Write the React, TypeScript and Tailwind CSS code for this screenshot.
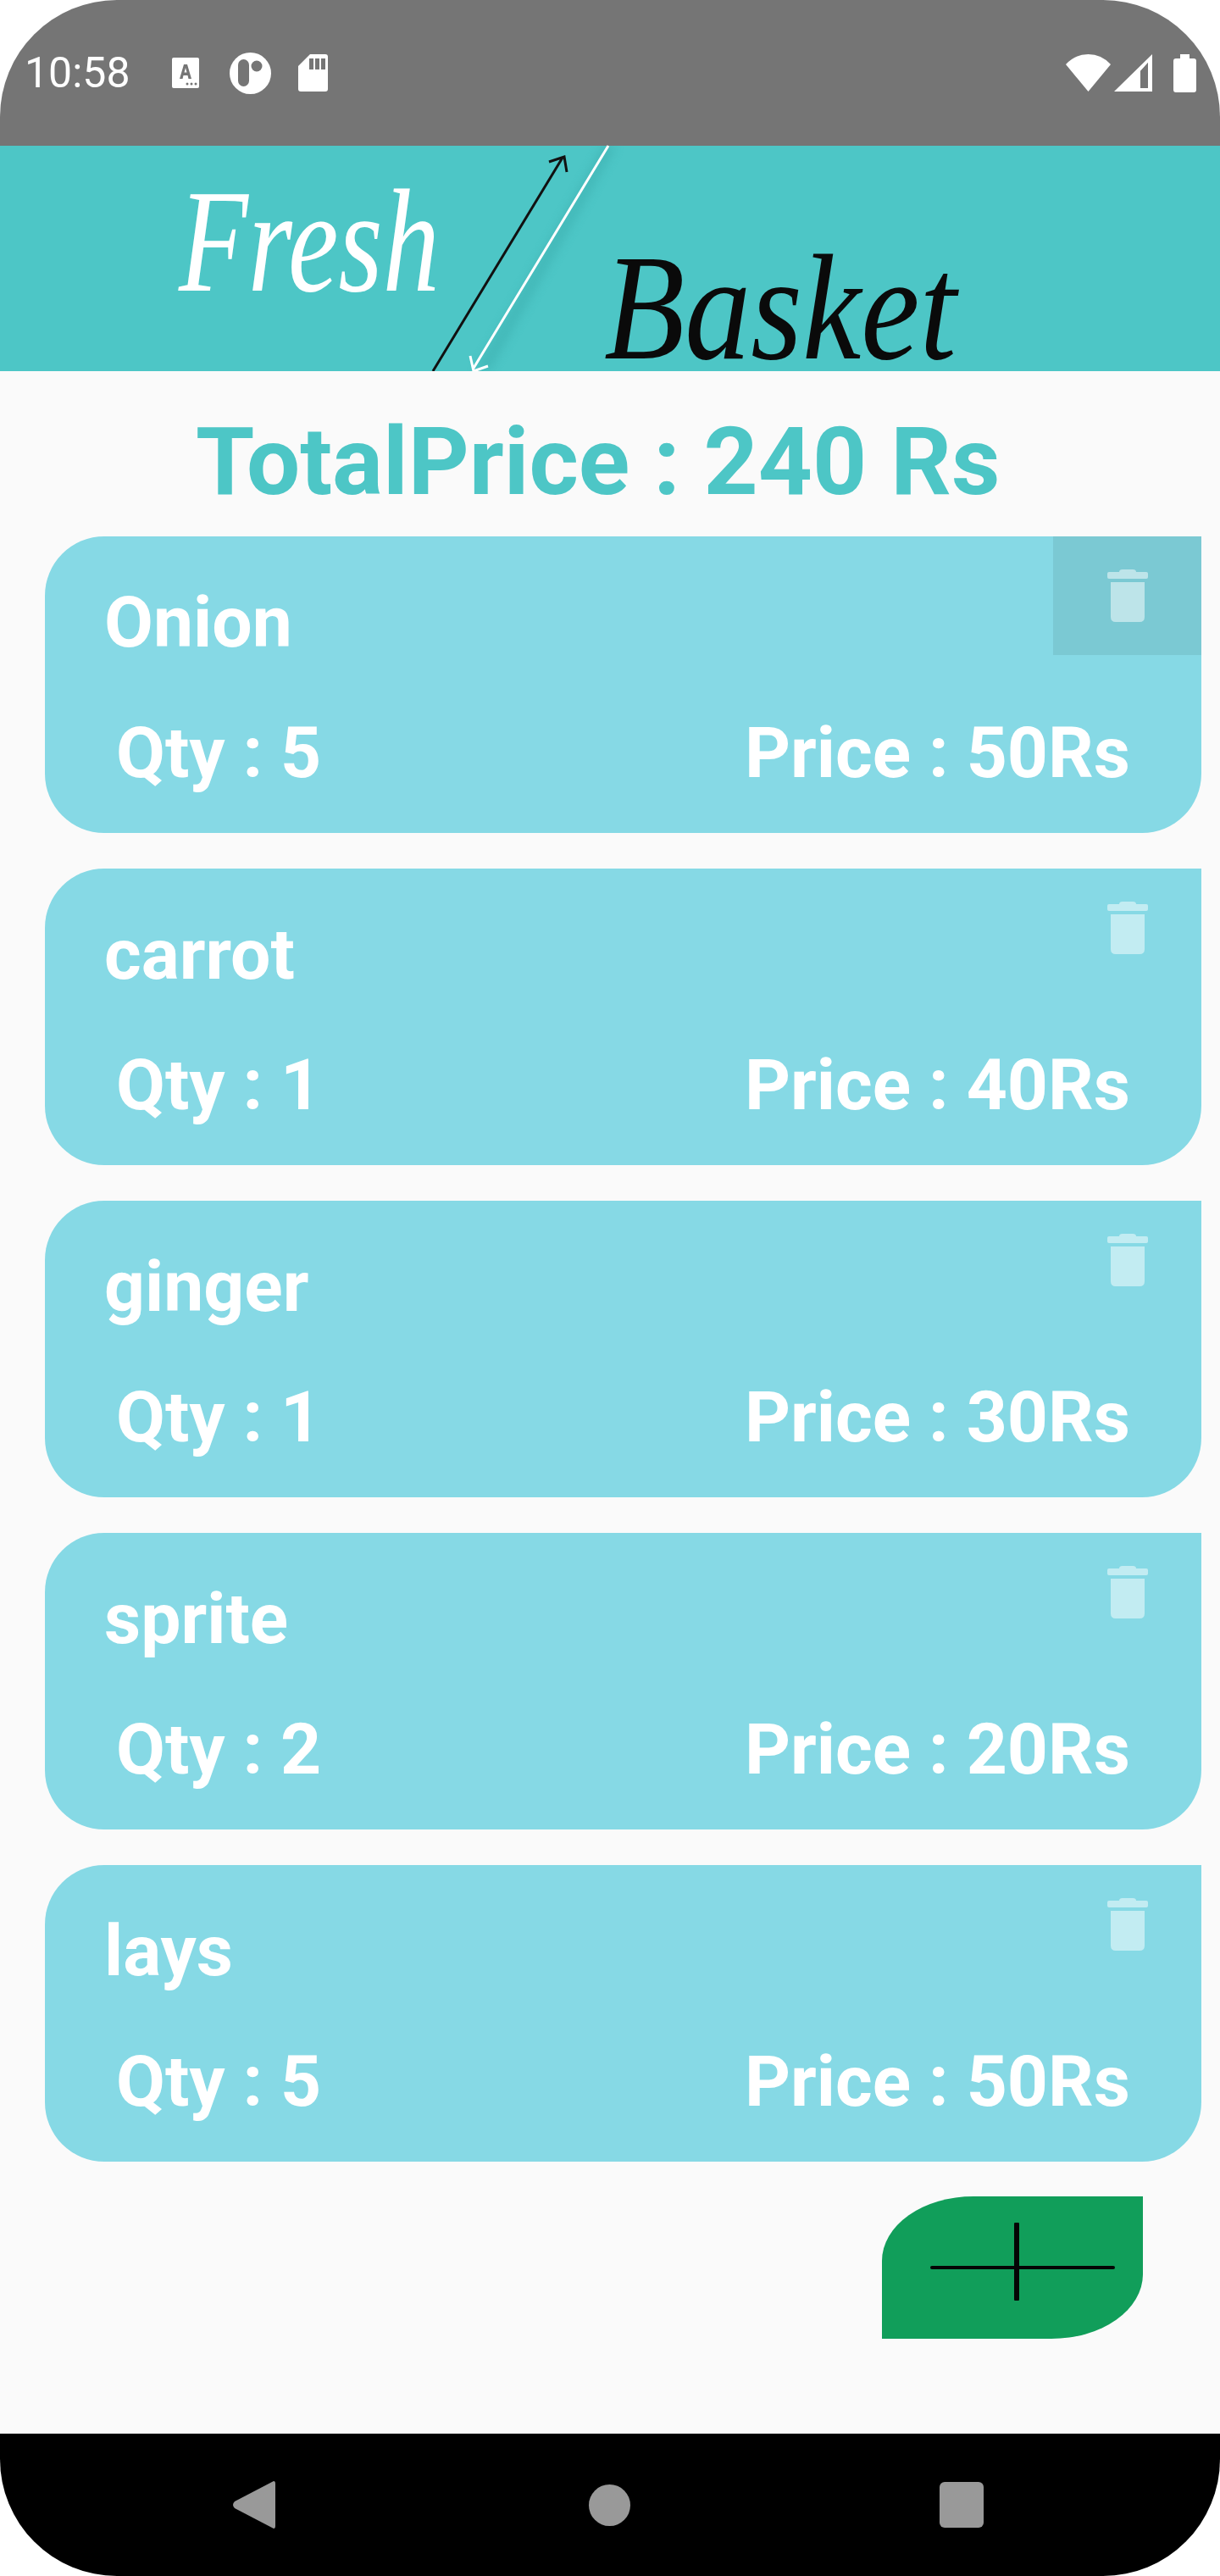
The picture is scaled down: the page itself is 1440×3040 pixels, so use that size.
const items = [
  { name: "Onion", qty: 5, price: 50, pressed: true },
  { name: "carrot", qty: 1, price: 40 },
  { name: "ginger", qty: 1, price: 30 },
  { name: "sprite", qty: 2, price: 20 },
  { name: "lays", qty: 5, price: 50 },
];

function StatusIcons() {
  return (
    <>
      <svg width="32" height="36" viewBox="0 0 32 36" className="ml-[49px]">
        <rect width="32" height="36" rx="2" fill="#fff" />
        <path d="M9 25 L14 8 H18 L23 25 H19.5 L18.5 21 H13.5 L12.5 25 Z M14.5 17.5 H17.5 L16 12 Z" fill="#757575" />
        <circle cx="18" cy="31" r="1.5" fill="#757575" />
        <circle cx="23" cy="31" r="1.5" fill="#757575" />
        <circle cx="28" cy="31" r="1.5" fill="#757575" />
      </svg>
      <svg width="49" height="49" viewBox="0 0 49 49" className="ml-[36px]">
        <circle cx="24.5" cy="24.5" r="24.5" fill="#fff" />
        <rect x="10" y="8" width="13" height="32" rx="6.5" fill="#757575" />
        <circle cx="32" cy="16" r="6.5" fill="#757575" />
      </svg>
      <svg width="35" height="44" viewBox="0 0 35 44" className="ml-[32px]">
        <path d="M14 0 H32 Q35 0 35 3 V41 Q35 44 32 44 H3 Q0 44 0 41 V14 Z" fill="#fff" />
        <rect x="13" y="5" width="5" height="13" fill="#757575" />
        <rect x="20" y="5" width="5" height="13" fill="#757575" />
        <rect x="27" y="5" width="5" height="13" fill="#757575" />
      </svg>
    </>
  );
}

function RightIcons() {
  return (
    <div className="flex items-center">
      <svg width="53" height="44" viewBox="0 0 53 44">
        <path d="M26.5 44 L0 12 Q11 0 26.5 0 Q42 0 53 12 Z" fill="#fff" />
      </svg>
      <svg width="45" height="44" viewBox="0 0 45 44" className="ml-[4px]">
        <path fill="#fff" fillRule="evenodd" d="M45 0 V44 H0 Z M40 10 L31 20 V40 H40 Z" />
        <path d="M31 20 L40 10 V39 H31 Z" fill="#757575" />
        <path d="M31 40 H41 V44 H31 Z" fill="#fff" />
      </svg>
      <svg width="27" height="45" viewBox="0 0 27 45" className="ml-[25px]">
        <path d="M8 0 H19 V5 H24 Q27 5 27 8 V42 Q27 45 24 45 H3 Q0 45 0 42 V8 Q0 5 3 5 H8 Z" fill="#fff" />
      </svg>
    </div>
  );
}

function Logo() {
  const serif = "'Liberation Serif', serif";
  return (
    <svg width="1440" height="266" viewBox="0 172 1440 266" className="block overflow-visible">
      <defs>
        <filter id="soft">
          <feGaussianBlur stdDeviation="6" />
        </filter>
        <clipPath id="band">
          <rect x="0" y="172" width="1440" height="266" />
        </clipPath>
      </defs>
      <g clipPath="url(#band)">
        <polygon points="712,172 728,172 578,438 560,438" fill="#2d9c9c" opacity="0.3" filter="url(#soft)" />
      </g>
      <text transform="translate(211 343) scale(1 1.3)" fontFamily={serif} fontStyle="italic" fontSize="134" fill="#fff">
        Fresh
      </text>
      <text transform="translate(713 423) scale(1 1.14)" fontFamily={serif} fontStyle="italic" fontSize="156" fill="#0a0a0a">
        Basket
      </text>
      <g fill="none" strokeWidth="3">
        <path d="M511 438 L664 186 M648 191 L666 185 L669 203" stroke="#111" />
        <path d="M718 172 L558 436 M555 420 L559 438 L576 432" stroke="#fff" />
      </g>
    </svg>
  );
}

function Trash() {
  return (
    <svg width="48" height="62" viewBox="0 0 48 62" className="opacity-50">
      <path d="M14 3 Q14 0 18 0 H30 Q34 0 34 3 H46 Q48 3 48 5 V9 Q48 11 46 11 H2 Q0 11 0 9 V5 Q0 3 2 3 Z" fill="#fff" />
      <path d="M4 15 H44 V56 Q44 62 38 62 H10 Q4 62 4 56 Z" fill="#fff" />
    </svg>
  );
}

function ItemCard({ name, qty, price, pressed }: { name: string; qty: number; price: number; pressed?: boolean }) {
  return (
    <div className="relative h-[350px] rounded-[70px] rounded-tr-none bg-[#86D9E5] pl-[70px] pr-[84px] pt-[53px] text-[#fff] text-[84px] leading-[98px] font-bold">
      <div>{name}</div>
      <div className="mt-[56px] flex justify-between pl-[14px]">
        <span>Qty : {qty}</span>
        <span>Price : {price}Rs</span>
      </div>
      <button className={`absolute right-0 top-0 flex h-[140px] w-[175px] justify-center pt-[39px] ${pressed ? "bg-[#7BC9D3]" : ""}`}>
        <Trash />
      </button>
    </div>
  );
}

export default function App() {
  return (
    <div className="flex h-[3040px] w-[1440px] flex-col overflow-hidden bg-white font-['Roboto',sans-serif]">
      <div className="flex h-[172px] items-center justify-between rounded-t-[138px] bg-[#757575] pl-[29px] pr-[28px] text-white">
        <div className="flex items-center">
          <span className="text-[50px] leading-[57px]">10:58</span>
          <StatusIcons />
        </div>
        <RightIcons />
      </div>
      <div className="h-[266px] bg-[#4DC6C6]">
        <Logo />
      </div>
      <div className="flex flex-1 flex-col bg-[#FAFAFA]">
        <div className="h-[195px] pl-[231px] pt-[41px] text-[112px] font-bold leading-[131px] text-[#4DC6C6]">
          TotalPrice : 240 Rs
        </div>
        <div className="flex flex-col gap-[42px] pl-[53px] pr-[22px]">
          {items.map((item) => (
            <ItemCard key={item.name} {...item} />
          ))}
        </div>
        <div className="mt-[41px] flex justify-end pr-[91px]">
          <button className="flex h-[168px] w-[308px] items-start rounded-tl-[108px_76px] rounded-br-[108px_76px] bg-[#119E5A] pl-[57px] pt-[31px]">
            <svg width="218" height="92" viewBox="0 0 218 92">
              <path d="M2 53 H216" stroke="#050505" strokeWidth="4" strokeLinecap="round" />
              <path d="M102 2 V90" stroke="#050505" strokeWidth="6" strokeLinecap="round" />
            </svg>
          </button>
        </div>
      </div>
      <div className="flex h-[168px] items-center rounded-b-[138px] bg-black pl-[275px]">
        <svg width="50" height="56" viewBox="0 0 50 56">
          <path d="M48 0 Q50 0 50 3 V53 Q50 56 48 56 L2 32 Q-2 28 2 24 Z" fill="#999" />
        </svg>
        <span className="ml-[370px] h-[49px] w-[49px] rounded-full bg-[#999]" />
        <span className="ml-[365px] h-[54px] w-[52px] rounded-[6px] bg-[#999]" />
      </div>
    </div>
  );
}
